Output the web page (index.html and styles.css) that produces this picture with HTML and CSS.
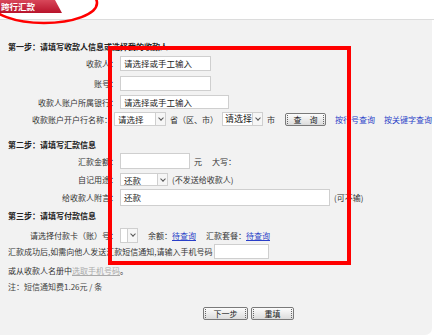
FILE: index.html
```html
<!DOCTYPE html>
<html lang="zh-CN">
<head>
    <meta charset="UTF-8">
    <title>跨行汇款</title>
    <link rel="stylesheet" href="styles.css">
</head>
<body>
    <!-- BEGIN::header -->
    <header class="top">
        <div class="tab">跨行汇款</div>
    </header>
    <!-- END::header -->

    <!-- BEGIN::panel -->
    <section class="panel">
        <h2 class="step step-1">第一步：请填写收款人信息或选择我的收款人</h2>

        <div class="row r-name">
            <label>收款人：</label>
            <div class="field w-91">请选择或手工输入</div>
        </div>
        <div class="row r-acct">
            <label>账号：</label>
            <div class="field w-91"></div>
        </div>
        <div class="row r-bank">
            <label>收款人账户所属银行：</label>
            <div class="field w-109">请选择或手工输入</div>
        </div>
        <div class="row r-branch">
            <label>收款账户开户行名称：</label>
            <div class="select w-52"><span>请选择</span><i class="arrow"></i></div>
            <span class="txt">省（区、市）</span>
            <div class="select w-41 big"><span>请选择</span><i class="arrow"></i></div>
            <span class="txt">市</span>
            <button class="btn b-query"><span>查　询</span></button>
            <a class="link blue">按行号查询</a>
            <a class="link blue">按关键字查询</a>
        </div>

        <h2 class="step step-2">第二步：请填写汇款信息</h2>

        <div class="row r-amount">
            <label>汇款金额：</label>
            <div class="field w-70"></div>
            <span class="txt">元</span>
            <span class="txt">大写：</span>
        </div>
        <div class="row r-use">
            <label>自记用途：</label>
            <div class="select w-48"><span>还款</span><i class="arrow"></i></div>
            <span class="txt">(不发送给收款人)</span>
        </div>
        <div class="row r-memo">
            <label>给收款人附言：</label>
            <div class="field w-210">还款</div>
            <span class="txt">(可不输)</span>
        </div>

        <h2 class="step step-3">第三步：请填写付款信息</h2>

        <div class="row r-card">
            <label>请选择付款卡（账）号：</label>
            <div class="select w-18"><span></span><i class="arrow"></i></div>
            <span class="txt">余额：<a class="link blue u">待查询</a></span>
            <span class="txt">汇款套餐：<a class="link blue u">待查询</a></span>
        </div>

        <div class="row r-sms">
            <span class="plain">汇款成功后,如需向他人发送汇款短信通知,请输入手机号码</span>
            <div class="field w-55"></div>
        </div>
        <p class="plain r-book">或从收款人名册中<a class="link grey u">选取手机号码</a>。</p>
        <p class="plain note">注：短信通知费1.26元 / 条</p>

        <div class="actions">
            <button class="btn b-next"><span>下一步</span></button>
            <button class="btn b-reset"><span>重填</span></button>
        </div>
    </section>
    <!-- END::panel -->

    <!-- annotations drawn over the screenshot -->
    <svg class="ellipse" width="110" height="30" viewBox="0 0 110 30">
        <ellipse cx="44" cy="3" rx="53" ry="20" fill="none" stroke="#f00" stroke-width="2.6"/>
    </svg>
    <div class="mark"></div>
</body>
</html>
```

FILE: styles.css
```css
*{
    margin: 0;
    padding: 0;
    box-sizing: border-box;
    font-family: "Noto Sans CJK SC", "Liberation Sans", sans-serif;
}

body{
    width: 434px;
    height: 336px;
    background: #fff;
    position: relative;
    overflow: hidden;
    font-size: 8px;
    color: #333;
}

.top{
    height: 20px;
    border-bottom: 1px solid #dcdcdc;
}

.tab{
    width: 62px;
    height: 13px;
    padding-left: 1px;
    line-height: 12px;
    font-size: 8.5px;
    font-weight: bold;
    color: #fff;
    background: linear-gradient(#d8475a, #b8132b);
    clip-path: polygon(0 0, 55px 0, 62px 13px, 0 13px);
}

.panel{
    width: 432px;
    height: 315px;
    background: #f2f2f2;
    border-bottom-right-radius: 7px;
    padding: 22px 0 0 8px;
}

.step{
    font-size: 8px;
    font-weight: bold;
    line-height: 10px;
    color: #222;
}

.step-2{ margin-top: 14px; }
.step-3{ margin-top: 5px; }

.row{
    display: flex;
    align-items: center;
    gap: 4px;
}

.row label{
    width: 110px;
    margin-right: -2px;
    text-align: right;
    white-space: nowrap;
}

.r-name{ margin-top: 4px; height: 15px; }
.r-acct{ margin-top: 5px; height: 15px; }
.r-bank{ margin-top: 4px; height: 14px; }
.r-branch{ margin-top: 3px; height: 14px; }
.r-amount{ margin-top: 3px; height: 16px; }
.r-use{ margin-top: 4px; height: 13px; }
.r-memo{ margin-top: 3px; height: 17px; }
.r-card{ margin-top: 7px; height: 15px; }
.r-sms{ margin-top: 1px; height: 15px; gap: 2px; }

.field{
    height: 100%;
    flex-shrink: 0;
    background: #fff;
    border: 1px solid #cfcfcf;
    padding-left: 3px;
    font-size: 8.5px;
    line-height: 13px;
    color: #222;
}

.r-memo .field{ line-height: 15px; }

.w-91{ width: 91px; }
.w-109{ width: 109px; }
.w-70{ width: 70px; }
.w-210{ width: 210px; }
.w-55{ width: 55px; }

.select{
    height: 100%;
    flex-shrink: 0;
    display: flex;
    background: #fff;
    border: 1px solid #cfcfcf;
    font-size: 8.5px;
    line-height: 12px;
    color: #222;
    white-space: nowrap;
    overflow: hidden;
}

.select span{
    flex: 1;
    padding-left: 3px;
    overflow: hidden;
}

.select.big{ font-size: 9px; }
.select.big span{ padding-left: 2px; }

.w-52{ width: 52px; }
.w-41{ width: 41px; }
.w-48{ width: 48px; }
.w-18{ width: 18px; }

.arrow{
    width: 10px;
    flex-shrink: 0;
    border-left: 1px solid #cfcfcf;
    background: #f6f6f6;
    position: relative;
}

.arrow::after{
    content: "";
    position: absolute;
    left: 3px;
    top: 3px;
    width: 3px;
    height: 3px;
    border-right: 1px solid #555;
    border-bottom: 1px solid #555;
    transform: rotate(45deg);
}

.txt{
    white-space: nowrap;
}

.r-branch .txt:last-of-type{ margin-right: 6px; }
.r-amount .txt:last-child{ margin-left: 6px; }
.r-card .txt{ margin-left: 6px; }
.r-card .txt + .txt{ margin-left: 6px; }

.link{
    cursor: pointer;
    white-space: nowrap;
}

.blue{ color: #2a3fc8; }
.grey{ color: #aaa; }
.u{ text-decoration: underline; }

.r-branch .link{ margin-left: 5px; }

.plain{
    line-height: 10px;
    white-space: nowrap;
}

.r-book{ margin-top: 7px; }
.note{ margin-top: 6px; color: #444; }

.btn{
    height: 13px;
    border: 1px solid #7a7a7a;
    border-radius: 2px;
    background: linear-gradient(#fcfcfc, #dcdcdc);
    font-size: 8px;
    color: #222;
    padding: 1px 1px;
    cursor: pointer;
}

.btn span{
    display: block;
    height: 9px;
    line-height: 9px;
    border-left: 1px dotted #666;
    border-right: 1px dotted #666;
}

.b-query{ width: 43px; }
.b-next{ width: 45px; }
.b-reset{ width: 43px; }

.actions{
    display: flex;
    gap: 3px;
    margin: 15px 0 0 195px;
}

.ellipse{
    position: absolute;
    left: 0;
    top: 0;
}

.mark{
    position: absolute;
    left: 108px;
    top: 46px;
    width: 243px;
    height: 219px;
    border: 4px solid #f00;
}
```
